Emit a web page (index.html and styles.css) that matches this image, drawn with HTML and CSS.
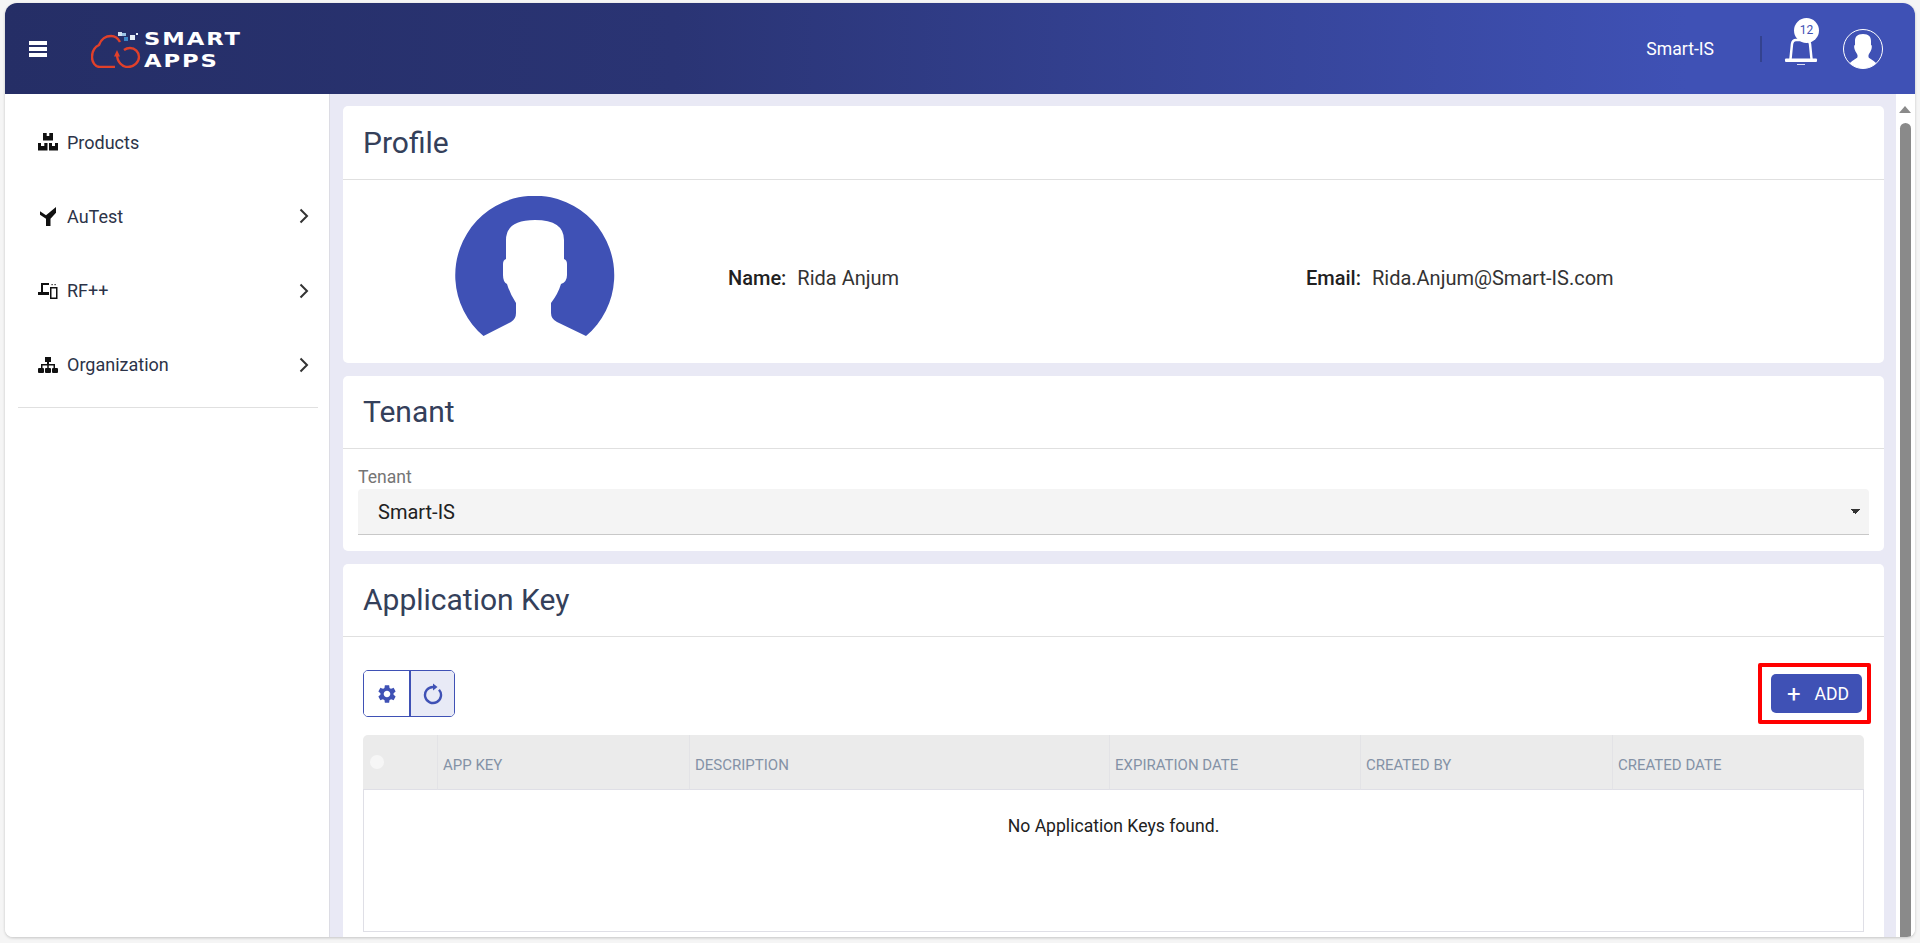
FILE: index.html
```html
<!DOCTYPE html>
<html lang="en">
<head>
  <meta charset="UTF-8" />
  <title>Smart Apps - Profile</title>
  <link rel="stylesheet" href="styles.css">
</head>
<body>
  <div class="app">
    <header class="topbar">
      <div class="hamburger"><span></span><span></span><span></span></div>
      <div class="logo">
        <svg class="logo-cloud" width="50" height="36" viewBox="0 -3 50 36">
          <path d="M24 32H9C4 32 1 27 1 22C1 16 4 12 8 10C10 4 15 1 20 1C24 1 27 3 29 7" fill="none" stroke="#e0402a" stroke-width="2.400"/>
          <path d="M26 19C26 27 31 32 37 32C43 32 48 27 48 22C48 17 44 13 39 13C37 13 35 13.500 33 15" fill="none" stroke="#e0402a" stroke-width="2.400"/>
          <path d="M26 15L23 21.500H29Z" fill="#e0402a"/>
          <rect x="27" y="-3" width="4" height="4" fill="#cfe0f0"/>
          <rect x="31" y="-2" width="4" height="3" fill="#9cc4e4"/>
          <rect x="33" y="2" width="4" height="4" fill="#3d86c6"/>
          <rect x="39" y="0" width="5" height="5" fill="#e6eef6"/>
          <rect x="45" y="-2" width="2" height="2" fill="#e6eef6"/>
        </svg>
        <div class="logo-text"><div>SMART</div><div>APPS</div></div>
      </div>
      <div class="topbar-right">
        <span class="tenant-name">Smart-IS</span>
        <span class="topbar-sep"></span>
        <div class="bell">
          <svg width="34" height="36" viewBox="0 0 34 36">
            <path d="M6.500 28L8 13C8.500 10 10 9 12 9H22C24 9 25.500 10 26 13L27.500 28" fill="none" stroke="#fff" stroke-width="2.500"/>
            <rect x="1" y="27.500" width="32" height="3.500" rx="1" fill="#fff"/>
            <rect x="13" y="33" width="8" height="1" fill="#d9dcf2"/>
          </svg>
          <span class="badge">12</span>
        </div>
        <svg class="top-avatar" width="40" height="40" viewBox="0 0 40 40">
          <defs><clipPath id="topClip"><circle cx="20" cy="20" r="19.500"/></clipPath></defs>
          <circle cx="20" cy="20" r="19.500" fill="none" stroke="#fff"/>
          <path clip-path="url(#topClip)" d="M20 5C14 5 12 8 12 12V16C11 16 11 18 11.500 20C12 22 13 23 14.500 26V28C14.500 30 5 32 4 40H36C35 32 25.500 30 25.500 28V26C27 23 28 22 28.500 20C29 18 29 16 28 16V12C28 8 26 5 20 5Z" fill="#fff"/>
        </svg>
      </div>
    </header>

    <div class="layout">
      <nav class="sidebar">
        <a class="nav-item">
          <svg class="nav-icon" width="20" height="18" viewBox="0 0 20 18">
            <path fill-rule="evenodd" d="M5 0H15V7.500H5ZM8.700 0V3H11.300V0ZM0 10H9.500V17.500H0ZM3 10V13H6.300V10ZM11 10H20V17.500H11ZM14 10V13H17V10Z"/>
          </svg>
          <span>Products</span>
        </a>
        <a class="nav-item">
          <svg class="nav-icon" width="20" height="19" viewBox="-2 0 20 19">
            <path d="M0 4.300L6 8.300L16 0V5.700L10.500 11.700V19H6V11.700L0 7.700Z"/>
          </svg>
          <span>AuTest</span>
          <svg class="chevron" width="10" height="16" viewBox="0 0 10 16"><path d="M1.500 1.500L8 8L1.500 14.500" fill="none" stroke="#333" stroke-width="2"/></svg>
        </a>
        <a class="nav-item">
          <svg class="nav-icon" width="20" height="16" viewBox="0 0 20 16">
            <path d="M3 0H11V2H5V9H11V12H0V9H3Z"/>
            <rect x="12.750" y="4.750" width="6" height="10.500" fill="none" stroke="#111" stroke-width="1.500"/>
            <rect x="13.500" y="1" width="1.200" height="1.200"/><rect x="16.500" y="1" width="1.200" height="1.200"/>
          </svg>
          <span>RF++</span>
          <svg class="chevron" width="10" height="16" viewBox="0 0 10 16"><path d="M1.500 1.500L8 8L1.500 14.500" fill="none" stroke="#333" stroke-width="2"/></svg>
        </a>
        <a class="nav-item">
          <svg class="nav-icon" width="20" height="16" viewBox="0 0 20 16">
            <path d="M7 0H13V5H11V7H17V11H15.500V8.500H10.750V11H9.250V8.500H4.500V11H3V7H9V5H7Z"/>
            <rect y="11" width="6" height="5" rx="1"/><rect x="7" y="11" width="6" height="5" rx="1"/><rect x="14" y="11" width="6" height="5" rx="1"/>
          </svg>
          <span>Organization</span>
          <svg class="chevron" width="10" height="16" viewBox="0 0 10 16"><path d="M1.500 1.500L8 8L1.500 14.500" fill="none" stroke="#333" stroke-width="2"/></svg>
        </a>
        <hr class="nav-divider">
      </nav>

      <main class="content">
        <section class="card profile-card">
          <h2 class="card-title">Profile</h2>
          <div class="profile-body">
            <div class="profile-pic">
              <svg width="160" height="140" viewBox="35 26 160 140">
                <path d="M63.500 166A79.500 79.500 0 1 1 166 166L137 152Q131 149 131 143V133Q138 124 141 114Q147 112 147 105V94Q147 90 144 89V70Q144 50 115 50Q86 50 86 70V89Q83 90 83 94V105Q83 112 87 114Q90 124 96 133V143Q96 149 91 152Z" fill="#3f51b5"/>
              </svg>
            </div>
            <div class="profile-field"><b>Name:</b> Rida Anjum</div>
            <div class="profile-field"><b>Email:</b> Rida.Anjum@Smart-IS.com</div>
          </div>
        </section>

        <section class="card tenant-card">
          <h2 class="card-title">Tenant</h2>
          <div class="tenant-body">
            <label class="field-label" for="tenant">Tenant</label>
            <select class="tenant-select" id="tenant">
              <option>Smart-IS</option>
            </select>
          </div>
        </section>

        <section class="card key-card">
          <h2 class="card-title">Application Key</h2>
          <div class="key-body">
            <div class="toolbar">
              <div class="btn-group">
                <button class="icon-btn">
                  <svg width="22" height="22" viewBox="0 0 24 24"><path fill="#3f51b5" d="M19.140 12.940c.04-.3.06-.61.06-.94 0-.32-.02-.64-.07-.94l2.030-1.580c.18-.14.23-.41.12-.61l-1.920-3.320c-.12-.22-.37-.29-.59-.22l-2.390.96c-.5-.38-1.030-.7-1.620-.94l-.36-2.540c-.04-.24-.24-.41-.48-.41h-3.840c-.24 0-.43.17-.47.41l-.36 2.540c-.59.24-1.130.57-1.620.94l-2.390-.96c-.22-.08-.47 0-.59.22L2.740 8.870c-.12.21-.08.47.12.61l2.030 1.580c-.05.3-.09.63-.09.94s.02.64.07.94l-2.030 1.580c-.18.14-.23.41-.12.61l1.920 3.320c.12.22.37.29.59.22l2.390-.96c.5.38 1.030.7 1.620.94l.36 2.540c.05.24.24.41.48.41h3.840c.24 0 .44-.17.47-.41l.36-2.540c.59-.24 1.130-.56 1.620-.94l2.390.96c.22.08.47 0 .59-.22l1.920-3.320c.12-.22.07-.47-.12-.61l-2.010-1.580zM12 15.600c-1.980 0-3.600-1.620-3.600-3.600s1.620-3.600 3.600-3.600 3.600 1.620 3.600 3.600-1.620 3.600-3.600 3.600z"/></svg>
                </button>
                <button class="icon-btn active">
                  <svg width="20" height="22" viewBox="0 0 20 22">
                    <path d="M10 4A8 8 0 1 0 16 6.700" fill="none" stroke="#3f51b5" stroke-width="2.400"/>
                    <path d="M10 .5L14.500 4L10 7.500Z" fill="#3f51b5"/>
                  </svg>
                </button>
              </div>
              <button class="add-btn"><span class="plus">+</span>ADD</button>
            </div>

            <table class="key-table">
              <colgroup>
                <col class="col-check"><col class="col-key"><col class="col-desc"><col class="col-exp"><col class="col-by"><col>
              </colgroup>
              <thead>
                <tr>
                  <th><span class="radio"></span></th>
                  <th>APP KEY</th>
                  <th>DESCRIPTION</th>
                  <th>EXPIRATION DATE</th>
                  <th>CREATED BY</th>
                  <th>CREATED DATE</th>
                </tr>
              </thead>
              <tbody>
                <tr><td colspan="6">No Application Keys found.</td></tr>
              </tbody>
            </table>
          </div>
        </section>
      </main>

      <div class="scrollbar">
        <span class="scroll-up"></span>
        <span class="scroll-thumb"></span>
      </div>
    </div>
  </div>
</body>
</html>
```
FILE: styles.css
```css
* { box-sizing: border-box; }
html, body { height: 100%; }
body {
  margin: 0;
  height: 943px;
  overflow: hidden;
  padding: 3px 5px 6px;
  background: #f5f5f5;
  font-family: Roboto, "Liberation Sans", Arial, sans-serif;
  color: #212121;
}
.app {
  height: 100%;
  display: flex;
  flex-direction: column;
  border-radius: 12px 12px 8px 8px;
  overflow: hidden;
  background: #fff;
  box-shadow: 0 1px 3px rgba(0, 0, 0, 0.2);
}

/* top bar */
.topbar {
  height: 91px;
  flex: none;
  display: flex;
  align-items: center;
  color: #fff;
  background: linear-gradient(90deg, #252e66 0%, #2a3474 35%, #3f51b5 88%);
}
.hamburger {
  width: 18px;
  margin-left: 24px;
  display: flex;
  flex-direction: column;
  gap: 2px;
}
.hamburger span { height: 4px; background: #fff; }
.logo {
  margin-left: 44px;
  display: flex;
  align-items: flex-start;
}
.logo-cloud { margin-top: 7px; }
.logo-text {
  margin: 3px 0 0 3px;
  font-family: "DejaVu Sans", sans-serif;
  font-weight: bold;
  font-size: 18px;
  line-height: 22px;
  letter-spacing: 1.500px;
  transform: scaleX(1.260);
  transform-origin: left;
}
.topbar-right {
  margin-left: auto;
  display: flex;
  align-items: center;
}
.tenant-name { font-size: 17.600px; }
.topbar-sep {
  width: 2px;
  height: 26px;
  margin-left: 46px;
  background: #33428f;
}
.bell {
  position: relative;
  margin-left: 22px;
  height: 36px;
  width: 34px;
}
.badge {
  position: absolute;
  left: 10px;
  top: -13px;
  width: 25px;
  height: 25px;
  border-radius: 50%;
  background: #fff;
  color: #3f51b5;
  font-size: 12px;
  line-height: 25px;
  text-align: center;
}
.top-avatar { margin: 0 32px 0 25px; }

/* layout */
.layout {
  flex: 1;
  min-height: 0;
  display: flex;
}
.sidebar {
  width: 325px;
  flex: none;
  padding-top: 11px;
  background: #fff;
  border-right: 1px solid #dcdce4;
}
.nav-item {
  height: 74.250px;
  display: flex;
  align-items: center;
  padding: 0 20px 0 33px;
  font-size: 18px;
  color: #2c3348;
}
.nav-icon { flex: none; fill: #111; }
.nav-item span { margin-left: 9px; }
.chevron { margin-left: auto; flex: none; }
.nav-divider {
  margin: 5px 11px 0 13px;
  border: none;
  border-top: 1px solid #e0e0e0;
}

.content {
  flex: 1;
  min-width: 0;
  overflow: hidden;
  padding: 12px 12px 0 13px;
  background: #e9e9f5;
}
.card {
  background: #fff;
  border-radius: 5px;
  margin-bottom: 13px;
}
.card-title {
  margin: 0;
  height: 73px;
  padding: 0 20px;
  font-size: 30px;
  font-weight: 400;
  line-height: 72px;
  color: #34405a;
  border-bottom: 1px solid #e0e0e0;
}
.profile-card .card-title { height: 74px; line-height: 73px; }

/* profile */
.profile-body {
  height: 183px;
  display: grid;
  grid-template-columns: 385px 578px 1fr;
  align-items: center;
}
.profile-pic {
  height: 100%;
  display: flex;
  justify-content: center;
  padding: 16px 1px 0 0;
}
.profile-field { padding-top: 13px; font-size: 20px; color: #333; }
.profile-field b { font-weight: 500; color: #212121; margin-right: 6px; }

/* tenant */
.tenant-body { padding: 19px 15px 16px; }
.field-label {
  display: block;
  font-size: 17.600px;
  line-height: 18px;
  color: #757575;
}
.tenant-select {
  display: block;
  width: 100%;
  height: 46px;
  margin-top: 3px;
  padding: 0 20px;
  border: none;
  border-bottom: 1px solid #c8c8c8;
  border-radius: 4px 4px 0 0;
  appearance: none;
  background-color: #f4f4f4;
  background-image: linear-gradient(45deg, transparent 50%, #333 50%), linear-gradient(-45deg, transparent 50%, #333 50%);
  background-size: 5px 5px;
  background-position: right 14px center, right 9px center;
  background-repeat: no-repeat;
  font-family: inherit;
  font-size: 20px;
  color: #212121;
}

/* application key */
.key-body { padding: 33px 20px 20px; }
.toolbar {
  display: flex;
  justify-content: space-between;
  align-items: center;
  margin-bottom: 18px;
}
.btn-group {
  display: flex;
  border: 1px solid #3f51b5;
  border-radius: 5px;
  overflow: hidden;
}
.icon-btn {
  width: 45px;
  height: 45px;
  padding: 0;
  border: none;
  background: #fff;
  display: flex;
  align-items: center;
  justify-content: center;
}
.icon-btn + .icon-btn { border-left: 2px solid #3f51b5; }
.icon-btn.active { background: #e8eaf6; }
.add-btn {
  position: relative;
  width: 91px;
  height: 39px;
  margin-right: 2px;
  border: none;
  border-radius: 5px;
  background: #3f51b5;
  color: #fff;
  font-family: inherit;
  font-size: 17.600px;
  display: flex;
  align-items: center;
  justify-content: center;
}
.add-btn::after {
  content: "";
  position: absolute;
  inset: -11px -9px -11px -13px;
  border: 4px solid #f00;
  border-radius: 2px;
}
.plus {
  font-size: 24px;
  line-height: 24px;
  margin: 0 14px 0 3px;
}
.key-table {
  width: 100%;
  height: 197px;
  table-layout: fixed;
  border-collapse: separate;
  border-spacing: 0;
}
.col-check { width: 74px; }
.col-key { width: 252px; }
.col-desc { width: 420px; }
.col-exp { width: 251px; }
.col-by { width: 252px; }
.key-table th {
  height: 55px;
  padding: 5px 5px 0;
  text-align: left;
  font-size: 15px;
  font-weight: 400;
  color: #8492a6;
  background: #ebebeb;
  border-left: 1px solid #e3e3e6;
  border-bottom: 1px solid #dfdfe6;
}
.key-table th:first-child { border-left: none; border-top-left-radius: 5px; position: relative; }
.key-table th:last-child { border-top-right-radius: 5px; }
.radio {
  position: absolute;
  left: 7px;
  top: 20px;
  width: 14px;
  height: 14px;
  border-radius: 50%;
  background: #f6f6f6;
}
.key-table td {
  padding: 26px 0 0;
  vertical-align: top;
  text-align: center;
  font-size: 17.600px;
  line-height: 20px;
  border: 1px solid #dfdfe6;
  border-top: none;
}

/* fake scrollbar */
.scrollbar {
  width: 19px;
  flex: none;
  position: relative;
  background: #fff;
}
.scroll-up {
  position: absolute;
  left: 3px;
  top: 12px;
  border-left: 6.500px solid transparent;
  border-right: 6.500px solid transparent;
  border-bottom: 7px solid #8a8a8a;
}
.scroll-thumb {
  position: absolute;
  left: 4px;
  top: 29px;
  bottom: 0;
  width: 11px;
  border-radius: 6px 6px 0 0;
  background: #8a8a8a;
}
```
